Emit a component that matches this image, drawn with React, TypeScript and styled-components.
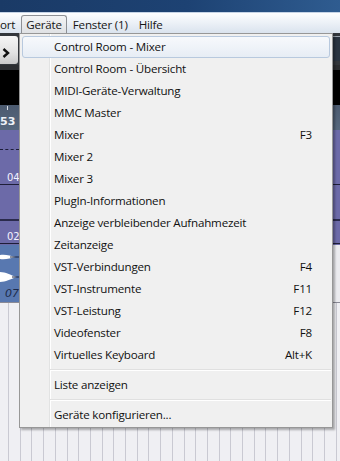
import React from "react";
import styled, { createGlobalStyle } from "styled-components";

const GlobalStyle = createGlobalStyle`
  html, body { margin: 0; padding: 0; background: #eeeef2; }
  body { font-family: "Open Sans", "Noto Sans", sans-serif; }
  * { box-sizing: border-box; }
`;

const Screen = styled.div`
  position: relative;
  width: 340px;
  height: 461px;
  overflow: hidden;
  display: flex;
  flex-direction: column;
`;

const TitleBar = styled.div`
  height: 13px;
  flex: none;
  background: linear-gradient(to right, #1a3a66 0%, #1d4273 55%, #2f5c90 100%);
  border-bottom: 1px solid #c6d4e6;
`;

const MenuBar = styled.div`
  height: 20px;
  flex: none;
  display: flex;
  align-items: flex-end;
  background: linear-gradient(#fdfeff, #dae3ee);
`;

const MenuBarItem = styled.div<{ $open?: boolean; $clipped?: boolean }>`
  height: 18px;
  display: flex;
  align-items: center;
  padding: 0 4px 1px;
  margin-right: 1px;
  margin-left: ${(p) => (p.$clipped ? "-5px" : "0")};
  border: 1px solid ${(p) => (p.$open ? "#8d9095" : "transparent")};
  border-bottom: none;
  border-radius: 3px 3px 0 0;
  background: ${(p) => (p.$open ? "linear-gradient(#f3f4f5, #dfe1e4)" : "transparent")};
  font-size: 11.6px;
  letter-spacing: -0.2px;
  color: #151515;
  white-space: nowrap;
  & + & {
    margin-left: ${(p) => (p.$open ? "0" : "0")};
  }
`;

const Workspace = styled.div`
  flex: 1;
  display: flex;
  flex-direction: column;
`;

const Toolbar = styled.div`
  height: 32px;
  flex: none;
  display: flex;
  justify-content: space-between;
  background: #33373c;
  padding-top: 3px;
`;

const NavButton = styled.div`
  width: 18px;
  height: 28px;
  display: flex;
  align-items: center;
  padding: 6px 0 0 2px;
  background: linear-gradient(#f6f6f6, #e2e2e2 60%, #c9c9c9);
  border-radius: 0 3px 3px 0;
`;

const ToolbarEdge = styled.div`
  width: 8px;
  height: 25px;
  background: #2a3440;
  border-top: 1px solid #9aa3ad;
`;

const BlackLane = styled.div`
  height: 40px;
  flex: none;
  background: #000;
  border-top: 5px solid #2c2e31;
`;

const Ruler = styled.div`
  height: 25px;
  flex: none;
  position: relative;
  background: linear-gradient(#4c5b70, #56677d);
  display: flex;
  align-items: flex-end;
  padding: 0 0 2px 0;
`;

const RulerTick = styled.div`
  position: absolute;
  left: 7px;
  top: 1px;
  width: 1px;
  height: 4px;
  background: #d8dde4;
`;

const RulerLabel = styled.span`
  font-family: "DejaVu Sans", sans-serif;
  font-size: 11px;
  font-weight: bold;
  color: #eef2f8;
  line-height: 12px;
`;

const PurpleTrack = styled.div`
  height: 115px;
  flex: none;
  background: #6c6aa8;
  display: flex;
  flex-direction: column;
`;

const Dots = styled.div`
  height: 6px;
  margin-top: 19px;
  border-top: 1px dashed #1d1d3a;
  width: 19px;
`;

const TrackLabelRow = styled.div<{ $line?: string }>`
  height: 14px;
  margin-top: ${(p) => p.$line || "0"};
  display: flex;
  justify-content: flex-start;
  padding-left: 7px;
  font-family: "DejaVu Sans", sans-serif;
  font-size: 10px;
  color: #f2f2ff;
  line-height: 14px;
  border-bottom: 1px solid #1e1e38;
`;

const PurpleGap = styled.div`
  height: 36px;
  flex: none;
  border-bottom: 2px solid #2a2a4c;
`;

const AudioTrack = styled.div`
  height: 58px;
  flex: none;
  display: flex;
  background: #ebebef;
  border-bottom: 1px solid #8a8a96;
`;

const AudioEvent = styled.div`
  width: 200px;
  background: #5878b0;
  display: flex;
  flex-direction: column;
  justify-content: flex-end;
  position: relative;
`;

const Wave = styled.svg`
  position: absolute;
  left: 0;
  top: 6px;
`;

const EventName = styled.span`
  font-family: "DejaVu Sans", sans-serif;
  font-style: italic;
  font-size: 11px;
  color: #1c2a4a;
  padding-left: 5px;
  line-height: 12px;
  margin-bottom: 2px;
`;

const Grid = styled.div`
  flex: 1;
  background-color: #efeff3;
  background-image: repeating-linear-gradient(
    to right,
    transparent 0,
    transparent 8px,
    #c9c9d2 8px,
    #c9c9d2 9px,
    transparent 9px,
    transparent 11.7px
  );
`;

const Dropdown = styled.div`
  position: absolute;
  top: 33px;
  left: 19px;
  width: 314px;
  height: 395px;
  border: 1px solid #979797;
  box-shadow: 2px 2px 2px rgba(0, 0, 0, 0.3);
  background: linear-gradient(
      to right,
      transparent 29px,
      #e2e3e3 29px,
      #e2e3e3 30px,
      #ffffff 30px,
      #ffffff 31px,
      transparent 31px
    ),
    #f0f0f0;
  padding: 2px 0;
  display: flex;
  flex-direction: column;
`;

const Item = styled.div<{ $active?: boolean }>`
  height: 22px;
  flex: none;
  margin: 0 2px;
  display: flex;
  align-items: center;
  justify-content: space-between;
  padding: 0 17px 1px 31px;
  border: 1px solid ${(p) => (p.$active ? "#b8c9de" : "transparent")};
  border-radius: 3px;
  background: ${(p) => (p.$active ? "linear-gradient(#f7f9fc, #e7edf5)" : "transparent")};
  font-size: 11.6px;
  letter-spacing: -0.2px;
  color: #111;
  white-space: nowrap;
`;

const Shortcut = styled.span`
  color: #111;
`;

const Separator = styled.div`
  height: 8px;
  flex: none;
  margin: 0 1px 0 30px;
  display: flex;
  flex-direction: column;
  justify-content: center;
  &::before {
    content: "";
    display: block;
    height: 1px;
    background: #e0e0e0;
  }
  &::after {
    content: "";
    display: block;
    height: 1px;
    background: #ffffff;
  }
`;

type Entry = { label: string; key?: string; active?: boolean } | "sep";

const entries: Entry[] = [
  { label: "Control Room - Mixer", active: true },
  { label: "Control Room - Übersicht" },
  { label: "MIDI-Geräte-Verwaltung" },
  { label: "MMC Master" },
  { label: "Mixer", key: "F3" },
  { label: "Mixer 2" },
  { label: "Mixer 3" },
  { label: "PlugIn-Informationen" },
  { label: "Anzeige verbleibender Aufnahmezeit" },
  { label: "Zeitanzeige" },
  { label: "VST-Verbindungen", key: "F4" },
  { label: "VST-Instrumente", key: "F11" },
  { label: "VST-Leistung", key: "F12" },
  { label: "Videofenster", key: "F8" },
  { label: "Virtuelles Keyboard", key: "Alt+K" },
  "sep",
  { label: "Liste anzeigen" },
  "sep",
  { label: "Geräte konfigurieren..." },
];

export default function App() {
  return (
    <>
      <GlobalStyle />
      <Screen>
        <TitleBar />
        <MenuBar>
          <MenuBarItem $clipped>ort</MenuBarItem>
          <MenuBarItem $open>Geräte</MenuBarItem>
          <MenuBarItem>Fenster (1)</MenuBarItem>
          <MenuBarItem>Hilfe</MenuBarItem>
        </MenuBar>
        <Workspace>
          <Toolbar>
            <NavButton>
              <svg width="8" height="10" viewBox="0 0 8 10">
                <polyline points="1.5,1 6,5 1.5,9" fill="none" stroke="#111" strokeWidth="2.4" />
              </svg>
            </NavButton>
            <ToolbarEdge />
          </Toolbar>
          <BlackLane />
          <Ruler>
            <RulerTick />
            <RulerLabel>53</RulerLabel>
          </Ruler>
          <PurpleTrack>
            <Dots />
            <TrackLabelRow $line="16px">04</TrackLabelRow>
            <PurpleGap />
            <TrackLabelRow $line="9px">02</TrackLabelRow>
          </PurpleTrack>
          <AudioTrack>
            <AudioEvent>
              <Wave width="20" height="36" viewBox="0 0 20 36">
                <path d="M0 4 C6 3, 10 5, 16 6 C10 7, 6 9, 0 8 Z" fill="#fff" />
                <path d="M0 21 C6 21, 10 24, 17 26 C10 28, 6 31, 0 31 Z" fill="#fff" />
                <line x1="10" y1="6" x2="20" y2="6" stroke="#1b2440" strokeWidth="1" />
                <line x1="12" y1="26" x2="20" y2="26" stroke="#1b2440" strokeWidth="1" />
              </Wave>
              <EventName>07</EventName>
            </AudioEvent>
          </AudioTrack>
          <Grid />
        </Workspace>
        <Dropdown>
          {entries.map((e, i) =>
            e === "sep" ? (
              <Separator key={i} />
            ) : (
              <Item key={i} $active={e.active}>
                <span>{e.label}</span>
                {e.key && <Shortcut>{e.key}</Shortcut>}
              </Item>
            )
          )}
        </Dropdown>
      </Screen>
    </>
  );
}
